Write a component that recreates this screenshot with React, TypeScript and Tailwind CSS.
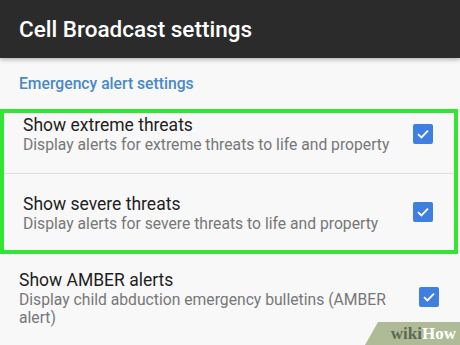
const rows = [
  {
    title: 'Show extreme threats',
    desc: 'Display alerts for extreme threats to life and property',
  },
  {
    title: 'Show severe threats',
    desc: 'Display alerts for severe threats to life and property',
  },
];

function CheckBox({ className }: { className?: string }) {
  return (
    <div className={`w-[20px] h-[20px] rounded-[2px] bg-[#3e7fdf] flex items-center justify-center shrink-0 ${className ?? ''}`}>
      <svg width="14" height="14" viewBox="0 0 14 14" fill="none">
        <path d="M2 7.2 L5.4 10.4 L12 3.6" stroke="white" strokeWidth="1.8" />
      </svg>
    </div>
  );
}

function Row({
  title,
  desc,
  className,
  boxClass,
}: {
  title: string;
  desc: string;
  className?: string;
  boxClass?: string;
}) {
  return (
    <div className={`flex items-center pl-[19px] pr-[21px] ${className ?? ''}`}>
      <div className="flex-1 min-w-0 pr-[22px]">
        <div className="text-[17.5px] leading-[22px] text-[#1e1e1e]">{title}</div>
        <div className="text-[15.7px] leading-[18px] text-[#777777]">{desc}</div>
      </div>
      <CheckBox className={boxClass} />
    </div>
  );
}

export default function App() {
  return (
    <div
      className="relative w-[460px] h-[345px] overflow-hidden bg-[#f8f8f8]"
      style={{ fontFamily: 'Roboto, "Noto Sans", sans-serif' }}
    >
      <div className="h-[58px] bg-[#2b2b2b] flex items-center pl-[19px] pt-[2px] shadow-[0_2px_4px_rgba(0,0,0,0.25)] relative z-10">
        <span className="text-[22.5px] font-medium text-white">Cell Broadcast settings</span>
      </div>

      <div className="h-[51px] pl-[19px] pt-[17px]">
        <div className="text-[15.7px] leading-[18px] font-medium text-[#4a88c8]">Emergency alert settings</div>
      </div>

      <div className="border-4 border-[#33e533] mr-[2px]">
        <Row {...rows[0]} className="h-[60px] pt-[1px] items-start" boxClass="mt-[10px]" />
        <div className="h-px bg-[#dedede]" />
        <Row {...rows[1]} className="h-[76px] pt-[1px]" boxClass="mb-[1px]" />
      </div>

      <Row
        title="Show AMBER alerts"
        desc="Display child abduction emergency bulletins (AMBER alert)"
        className="pt-[15px] [&>div:first-child]:pr-[26px]"
        boxClass="mb-[3px]"
      />

      <div className="absolute right-0 bottom-0 h-[23px] w-[95px] bg-[#afbb97] flex items-center justify-end pr-[4px] [clip-path:polygon(13px_0,100%_0,100%_100%,0_100%)]">
        <span
          className="text-[17px] font-bold leading-none"
          style={{ fontFamily: '"Liberation Serif", serif' }}
        >
          <span className="text-[#5d6a52]">wiki</span>
          <span className="text-white">How</span>
        </span>
      </div>
    </div>
  );
}
